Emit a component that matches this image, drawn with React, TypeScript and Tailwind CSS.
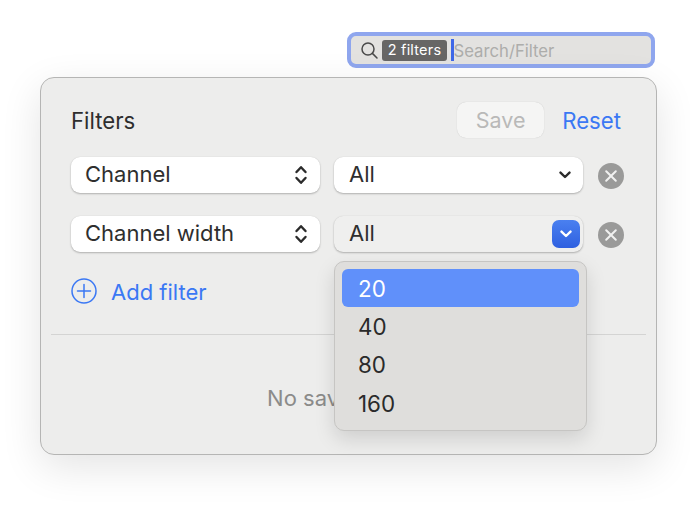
import React from "react";

const font = { fontFamily: "Inter, 'Noto Sans', sans-serif" };

function UpDown() {
  return (
    <svg width="14" height="24" viewBox="0 0 14 24" fill="none" stroke="#2b2b2b" strokeWidth="2.4" strokeLinecap="round" strokeLinejoin="round">
      <path d="M2.5 9 7 4.2 11.5 9" />
      <path d="M2.5 15 7 19.8 11.5 15" />
    </svg>
  );
}

function Chevron({ color = "#2b2b2b" }: { color?: string }) {
  return (
    <svg width="12" height="8" viewBox="0 0 12 8" fill="none" stroke={color} strokeWidth="2.4" strokeLinecap="round" strokeLinejoin="round">
      <path d="M1.5 1.6 6 6 10.5 1.6" />
    </svg>
  );
}

function RemoveButton() {
  return (
    <div className="w-[26px] h-[26px] rounded-full bg-[#9a9a99] flex items-center justify-center shrink-0 ml-[15px] mt-[2px]">
      <svg width="14" height="14" viewBox="0 0 14 14" fill="none" stroke="#f1f1f0" strokeWidth="2" strokeLinecap="round">
        <path d="M2.2 2.2 11.8 11.8M11.8 2.2 2.2 11.8" />
      </svg>
    </div>
  );
}

function FieldSelect({ label }: { label: string }) {
  return (
    <div className="w-[249px] h-[36px] rounded-[9px] bg-white shadow-[0_1px_2px_rgba(0,0,0,0.25),0_0_1px_rgba(0,0,0,0.12)] flex items-center justify-between pl-[14px] pr-[12px] pb-[1px] text-[22px] text-[#2e2e2e]">
      <span>{label}</span>
      <UpDown />
    </div>
  );
}

export default function App() {
  return (
    <div className="w-[690px] h-[526px] bg-white overflow-hidden pt-[32px] pl-[40px]" style={font}>
      <div className="flex justify-end w-[615px] mb-[9px]">
        <div className="w-[308px] h-[36px] rounded-[9px] border-[4px] border-[#8fa6ee] bg-[#e3e2e0] flex items-center pl-[9px]">
          <svg width="19" height="19" viewBox="0 0 19 19" fill="none" stroke="#4a4a4a" strokeWidth="1.5" strokeLinecap="round" className="shrink-0">
            <circle cx="8" cy="8" r="6" />
            <path d="M12.4 12.4 17 17" />
          </svg>
          <span className="ml-[3px] h-[21px] w-[65px] rounded-[3px] bg-[#676665] text-white text-[14.5px] flex items-center justify-center whitespace-nowrap tracking-[0.2px]">
            2 filters
          </span>
          <span className="ml-[4px] w-[2.5px] h-[22px] bg-[#3f68e8] shrink-0" />
          <span className="text-[16.7px] text-[#adadab] pt-[3px]">Search/Filter</span>
        </div>
      </div>

      <div className="relative w-[617px] h-[378px] rounded-[14px] border border-[#b5b5b4] bg-[#ededec] shadow-[0_12px_40px_rgba(0,0,0,0.11)] flex flex-col">
        <div className="flex items-center justify-between pt-[24px] pl-[30px] pr-[35px] h-[60px]">
          <span className="text-[22.2px] text-[#2e2e2e] pt-[1px]">Filters</span>
          <div className="flex items-center gap-[18px]">
            <div className="w-[87px] h-[36px] rounded-[9px] bg-[#f5f5f4] shadow-[0_0_1px_rgba(0,0,0,0.2)] flex items-center justify-center text-[21.5px] text-[#b9b9b8]">
              Save
            </div>
            <span className="text-[22.2px] text-[#3b78f4] pt-[1px]">Reset</span>
          </div>
        </div>

        <div className="flex items-center pl-[30px] mt-[19px] h-[36px]">
          <FieldSelect label="Channel" />
          <div className="ml-[14px] w-[249px] h-[36px] rounded-[9px] bg-white shadow-[0_1px_2px_rgba(0,0,0,0.25),0_0_1px_rgba(0,0,0,0.12)] flex items-center justify-between pl-[15px] pr-[12px] pb-[1px] text-[22px] text-[#2e2e2e]">
            <span>All</span>
            <Chevron />
          </div>
          <RemoveButton />
        </div>

        <div className="flex items-center pl-[30px] mt-[23px] h-[36px]">
          <FieldSelect label="Channel width" />
          <div className="ml-[14px] w-[249px] h-[36px] rounded-[9px] bg-[#efefee] shadow-[0_1px_2px_rgba(0,0,0,0.25),0_0_1px_rgba(0,0,0,0.12)] flex items-center justify-between pl-[15px] pr-[3px] text-[22px] text-[#2e2e2e]">
            <span className="pb-[1px]">All</span>
            <div className="w-[28px] h-[28px] rounded-[7px] bg-gradient-to-b from-[#4a80f0] to-[#2f60e0] flex items-center justify-center">
              <Chevron color="#ffffff" />
            </div>
          </div>
          <RemoveButton />
        </div>

        <div className="flex items-center pl-[30px] mt-[21px] h-[36px]">
          <svg width="26" height="26" viewBox="0 0 26 26" fill="none" stroke="#3b78f4" strokeWidth="1.5" strokeLinecap="round">
            <circle cx="13" cy="13" r="12" />
            <path d="M13 6.5v13M6.5 13h13" />
          </svg>
          <span className="ml-[14px] pt-[2px] text-[22px] text-[#3b78f4]">Add filter</span>
        </div>

        <div className="mx-[10px] mt-[25px] h-px bg-[#d4d4d3]" />

        <div className="flex-1 flex justify-center pt-[47px] text-[22px] text-[#8b8b8a]">
          <span>No saved filters</span>
        </div>

        <div className="absolute left-[293px] top-[183px] w-[253px] h-[170px] rounded-[10px] border border-[#c6c5c3] bg-[#dfdedc] shadow-[0_8px_20px_rgba(0,0,0,0.13)] p-[7px] text-[22.4px] text-[#2a2a2a]">
          <div className="h-[38px] rounded-[6px] bg-[#6090fa] text-white flex items-center pl-[16px] pt-[1px]">20</div>
          <div className="h-[38.5px] flex items-center pl-[16px] pt-[1px]">40</div>
          <div className="h-[38.5px] flex items-center pl-[16px] pt-[1px]">80</div>
          <div className="h-[38.5px] flex items-center pl-[16px] pt-[2px]">160</div>
        </div>
      </div>
    </div>
  );
}
